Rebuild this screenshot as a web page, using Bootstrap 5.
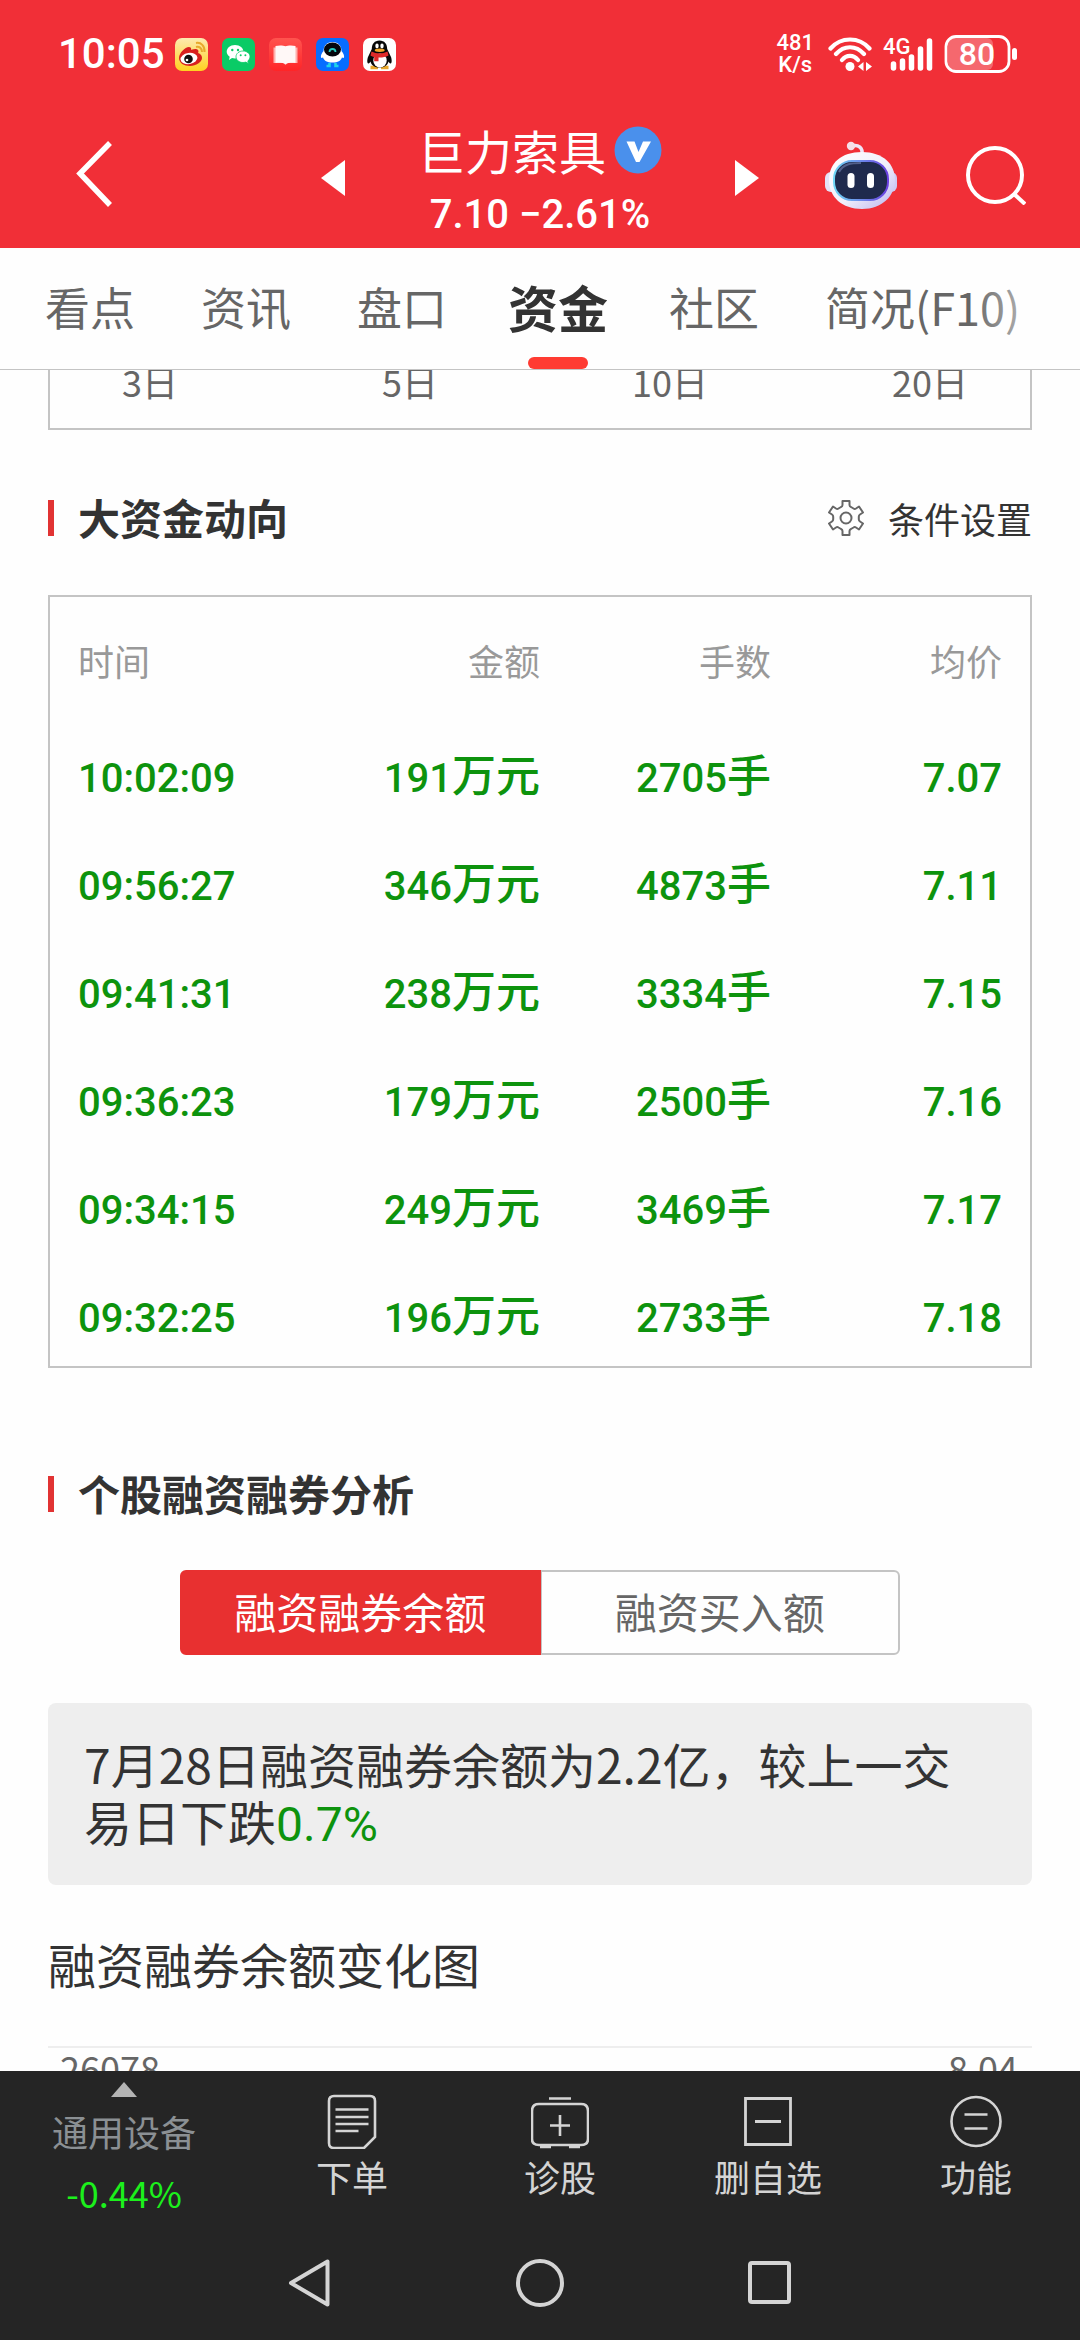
<!DOCTYPE html>
<html lang="zh-CN">
<head>
<meta charset="utf-8">
<meta name="viewport" content="width=device-width, initial-scale=1">
<title>巨力索具 资金</title>
<link href="https://cdn.jsdelivr.net/npm/bootstrap@5.3.0/dist/css/bootstrap.min.css" rel="stylesheet">
<style>
  :root { --cn: "Noto Sans CJK SC", "Noto Sans", sans-serif; --num: Roboto, "Noto Sans CJK SC", sans-serif; }
  body { font-family: var(--cn); font-size: 36px; line-height: 48px; color: #333; background: #fefefe; }
  a { text-decoration: none; color: inherit; }
  svg { display: block; flex: none; }
  .num { font-family: var(--num); }

  .top-area { background: #f12f37; color: #fff; }
  .status-bar { padding: 28px 62px 0 58px; height: 80px; }
  .clock { font-size: 42px; font-weight: 500; line-height: 52px; }
  .app-icons { margin-left: 10px; gap: 14px; }
  .speed { font-size: 22px; font-weight: 500; line-height: 22px; margin-right: 14px; }
  .title-bar { height: 168px; padding: 28px 54px 0; }
  .title-side { flex: 1 1 0; }
  .title-actions { gap: 69px; padding-bottom: 6px; }
  .switcher { width: 438px; }
  .stock-block { padding-top: 16px; }
  .icon-btn { border: 0; padding: 0; background: none; color: inherit; }
  .back-btn { margin-left: 22px; }
  .stock-name { font-size: 47px; line-height: 58px; margin: 0; font-weight: 400; }
  .stock-price { font-size: 40px; line-height: 72px; font-weight: 500; }

  .tab-strip { height: 122px; padding: 0 45px; gap: 66px; font-size: 45px; color: #666; background: #fefefe; border-bottom: 1px solid #c4c4c4; flex-wrap: nowrap; overflow: hidden; }
  .tab-strip::after { content: ""; position: absolute; inset: 0 0 0 auto; width: 110px; background: linear-gradient(90deg, #fefefe00, #fefefe); }
  .tab-strip a { height: 121px; line-height: 117px; white-space: nowrap; position: relative; }
  .tab-strip a.active { font-size: 50px; font-weight: 700; color: #333; margin: 0 -5px; }
  .tab-strip a.active::after { content: ""; position: absolute; left: 50%; bottom: 0; width: 60px; height: 12px; margin-left: -30px; border-radius: 6px; background: #ff3b32; }

  .page-body { padding: 0 48px; flex: 1 1 0; min-height: 0; }
  .framed { border: 2px solid #c4c4c4; }
  .period-box { border-top: 0; padding-bottom: 36px; color: #666; line-height: 22px; }
  .period-box .row { --bs-gutter-x: 60px; }
  .sec-head { height: 60px; }
  .sec-head h2 { font-size: 42px; line-height: 58px; font-weight: 700; margin: 0; padding: 0 0 2px 24px; }
  .sec-bar { width: 6px; height: 36px; background: #e13333; }
  .head-a { margin-top: 58px; margin-bottom: 47px; }
  .head-b { margin-top: 96px; margin-bottom: 46px; }
  .settings { color: #333; gap: 24px; }

  .flow-box { padding: 0 28px; }
  .flow-table { table-layout: fixed; margin: 0; --bs-table-bg: transparent; }
  .flow-table th, .flow-table td { padding: 0; border: 0; vertical-align: middle; text-align: right; }
  .flow-table th { height: 125px; font-weight: 400; color: #999; }
  .flow-table td { height: 108px; padding-top: 21px; vertical-align: baseline; font-family: var(--num); font-size: 40px; font-weight: 500; color: #0d930d; line-height: 60px; }
  .flow-table tr:last-child td { height: 104px; }
  .flow-table th:first-child, .flow-table td:first-child { text-align: left; }
  .unit { font-family: var(--cn); font-size: 44px; font-weight: 500; }

  .seg { width: 720px; max-width: 100%; height: 85px; }
  .seg .btn { font-size: 42px; line-height: 60px; padding: 0 0 4px; border: 2px solid #c4c4c4; border-radius: 6px; color: #666; flex: 1 1 0; }
  .seg .btn.active { background: #e83030; border-color: #e83030; color: #fff; }
  .summary { margin-top: 48px; padding: 32px 36px 36px; border-radius: 8px; background: #eee; font-size: 48px; line-height: 57px; }
  .fall { color: #0d930d; line-height: 40px; }
  .chart-title { margin: 48px 0 53px; font-size: 48px; line-height: 60px; font-weight: 400; }
  .chart-top { border-top: 2px solid #eee; padding: 0 14px 0 12px; line-height: 38px; color: #666; }

  .bottom-area { background: #252525; color: #d4d4d4; }
  .tool-row { height: 165px; }
  .index-cell { width: 248px; padding-top: 11px; }
  .index-name { color: #8b9094; line-height: 48px; margin-top: 10px; }
  .index-change { color: #1cf01c; line-height: 48px; margin-top: 13px; }
  .tool { flex: 1 1 0; padding-top: 22px; gap: 3px; line-height: 48px; }
  .sys-row { height: 104px; gap: 182px; padding-bottom: 10px; }
</style>
</head>
<body>
<div class="vh-100 d-flex flex-column overflow-hidden">
  <header class="top-area">
    <div class="status-bar d-flex justify-content-between align-items-center">
      <div class="d-flex align-items-center num">
        <span class="clock">10:05</span>
        <div class="app-icons d-flex">
          <svg width="33" height="33" viewBox="0 0 33 33"><defs><linearGradient id="wb" x2="0" y2="1"><stop stop-color="#fdeab0"/><stop offset="1" stop-color="#ffd21f"/></linearGradient></defs><rect width="33" height="33" rx="7" fill="url(#wb)"/><path d="M4 20C4 15 10 9 14 9c3 0 2 3 2 3s5-2 7 0c1 1 0 3 0 3s4 1 4 5-6 8-12 8S4 25 4 20z" fill="#d8201e"/><ellipse cx="14" cy="20.500" rx="8.500" ry="5.600" fill="#fff" transform="rotate(-8 14 20.500)"/><circle cx="13.500" cy="21" r="4.300" fill="#111"/><circle cx="12" cy="22" r="1.300" fill="#fff"/><path d="M21 9c3-1 6 1 6 5M21 5c5-1 9 3 8.500 9" fill="none" stroke="#e8a92c" stroke-width="2"/></svg>
          <svg width="33" height="33" viewBox="0 0 33 33"><rect width="33" height="33" rx="7" fill="#0acb66"/><path d="M13 7c5 0 8.500 3 8.500 6.800S18 20.500 13 20.500c-1 0-2-.2-3-.5l-3 2 .7-3.300C6 17.500 4.700 16 4.700 13.800 4.700 10 8 7 13 7z" fill="#fff"/><path d="M21 13c4 0 7 2.500 7 5.800 0 1.700-1 3.200-2.200 4.200l.6 2.500-2.600-1.400c-1 .2-1.800.4-2.800.4-4 0-7-2.500-7-5.700S17 13 21 13z" fill="#fff" stroke="#0acb66" stroke-width=".8"/><g fill="#0acb66"><circle cx="10.300" cy="12" r="1.200"/><circle cx="16" cy="12" r="1.200"/><circle cx="18.700" cy="17.300" r="1"/><circle cx="23.400" cy="17.300" r="1"/></g></svg>
          <svg width="33" height="33" viewBox="0 0 33 33"><defs><linearGradient id="bk" x2="0" y2="1"><stop stop-color="#ff544f"/><stop offset="1" stop-color="#ff2527"/></linearGradient></defs><rect width="33" height="33" rx="7" fill="url(#bk)"/><path d="M4.500 9.500h24v15.500h-10l-2 2-2-2h-10z" fill="#ffb0ac"/><path d="M6.500 8c4-1 8-.5 10 .3C18.500 7.500 22.500 7 26.500 8v17c-4-.5-8 0-10 1-2-1-6-1.500-10-1z" fill="#fff8f7"/></svg>
          <svg width="33" height="33" viewBox="0 0 33 33"><rect width="33" height="33" rx="7" fill="#066dff"/><path d="M16.500 4c6 0 9 4 9 9 2 2 3 5 2.500 6.500-.5 1-1.500 0-2 0-1 3-4 5-9.500 5s-8.500-2-9.500-5c-.5 0-1.500 1-2 0C4.500 18 5.500 15 7.500 13c0-5 3-9 9-9z" fill="#fff"/><ellipse cx="16.500" cy="11.500" rx="8.500" ry="7" fill="#05070c"/><path d="M13.500 14c0-4 6-4 6 0" fill="none" stroke="#25cfc0" stroke-width="1.800"/><path d="M13.500 25v3h-3m9-3v3h3" fill="none" stroke="#1fd4e8" stroke-width="2.600"/></svg>
          <svg width="33" height="33" viewBox="0 0 33 33"><rect width="33" height="33" rx="7" fill="#fff"/><path d="M7.500 29.500h7.500m3 0h7.500" stroke="#e9a92c" stroke-width="3.400"/><path d="M16.500 2.500c5 0 7.700 3.500 7.700 8.500l3.800 8c1 3 1 6-.3 6.500-.8.300-1.700-1-2.200-2-1 4-4.500 6-9 6s-8-2-9-6c-.5 1-1.400 2.300-2.200 2C4 25 4 22 5 19l3.800-8c0-5 2.700-8.500 7.700-8.500z" fill="#080808"/><ellipse cx="17" cy="22.500" rx="6.700" ry="7" fill="#fff"/><path d="M8.500 13.500c5 2.500 11 2.500 16 0l1 4c-3 1.700-7 2.200-10 2v3.800h-4.300V19c-1.700-.4-3-1-3.700-1.500z" fill="#e02a2a"/><ellipse cx="14" cy="8" rx="1.700" ry="2.400" fill="#fff"/><ellipse cx="19" cy="8" rx="1.700" ry="2.400" fill="#fff"/><ellipse cx="16.700" cy="12.300" rx="5" ry="1.700" fill="#f2a72a"/></svg>
        </div>
      </div>
      <div class="d-flex align-items-center num">
        <div class="speed text-center">481<br>K/s</div>
        <svg width="44" height="36" viewBox="0 0 44 36" fill="none" stroke="#fff" stroke-width="4.200" stroke-linecap="round"><path d="M2.500 12.500C13 .5 31 .5 41.500 12.500M8 18c8-9 20-9 28 0M14 24c4.500-5.500 11.500-5.500 16 0"/><circle cx="22" cy="30.500" r="4.500" fill="#fff" stroke="none"/><path d="M35.500 26v9l-5.500-4.500zM38 26v9l6-4.500z" fill="#fff" stroke="none"/></svg>
        <svg class="ms-2" width="54" height="36" viewBox="0 0 54 36" stroke="#fff" stroke-width="5.500" stroke-linecap="round"><text x="3" y="18" fill="#fff" stroke="none" font-size="22" font-weight="500">4G</text><path d="M13.500 28v4M22.500 25v7M31.500 21v11M40.500 13v19M49.500 5v27"/></svg>
        <svg class="ms-2" width="76" height="38" viewBox="0 0 76 38"><rect x="6" y="3" width="45" height="32" rx="6" fill="#fff" fill-opacity=".28"/><rect x="4" y="1.500" width="63" height="35" rx="10" fill="none" stroke="#fff" stroke-width="2.800"/><rect x="70" y="13" width="5" height="12" rx="2.500" fill="#fff"/><text x="35" y="30" text-anchor="middle" fill="#fff" font-size="32" font-weight="500">80</text></svg>
      </div>
    </div>
    <div class="title-bar d-flex align-items-center">
      <div class="title-side">
        <button class="icon-btn back-btn" aria-label="返回"><svg width="38" height="66" viewBox="0 0 38 66"><path d="M34 2 4 32.500 34 64" fill="none" stroke="#fff" stroke-width="5.500"/></svg></button>
      </div>
      <div class="switcher flex-shrink-0 d-flex justify-content-between align-items-center">
        <button class="icon-btn" aria-label="上一只"><svg width="24" height="36" viewBox="0 0 24 36"><path d="M24 0v36L0 18z" fill="#fff"/></svg></button>
        <div class="stock-block text-center">
          <div class="d-flex align-items-center justify-content-center gap-2">
            <h1 class="stock-name">巨力索具</h1>
            <svg width="48" height="48" viewBox="0 0 48 48"><circle cx="24" cy="24" r="23.500" fill="#4a90ec"/><path d="M12.500 15.500h8l4 10.500 4.500-10.500h8L25.500 36h-3.500z" fill="#fff"/></svg>
          </div>
          <div class="stock-price num">7.10 −2.61%</div>
        </div>
        <button class="icon-btn" aria-label="下一只"><svg width="24" height="36" viewBox="0 0 24 36"><path d="M0 0v36l24-18z" fill="#fff"/></svg></button>
      </div>
      <div class="title-side title-actions d-flex justify-content-end align-items-center">
        <button class="icon-btn" aria-label="智能助手"><svg width="72" height="68" viewBox="0 0 72 68"><defs><linearGradient id="hd" x2="1" y2="1"><stop stop-color="#fff"/><stop offset=".55" stop-color="#f1effb"/><stop offset="1" stop-color="#b9b4ee"/></linearGradient><linearGradient id="vz" x2="1" y2="0"><stop stop-color="#6fd6f5"/><stop offset="1" stop-color="#6a3fe0"/></linearGradient></defs><path d="M26 5c8-2 12 2 11 9" fill="none" stroke="#efe6f7" stroke-width="3.500"/><circle cx="26" cy="5" r="4.200" fill="#f6dfe8"/><rect y="31" width="14" height="20" rx="6" fill="#e4e2f7"/><rect x="58" y="31" width="14" height="20" rx="6" fill="#cfcbf3"/><path d="M37 11c21 0 33 12 33 28S57 68 37 68 4 56 4 39s12-28 33-28z" fill="url(#hd)"/><rect x="9" y="20" width="54" height="39" rx="18" fill="#1f2a4d" stroke="url(#vz)" stroke-width="2"/><path d="M14 31c4-8 12-9 22-9" fill="none" stroke="#53608a" stroke-width="2"/><rect x="22.500" y="32" width="7" height="15" rx="3.500" fill="#fff"/><rect x="42" y="32" width="7" height="15" rx="3.500" fill="#fff"/></svg></button>
        <button class="icon-btn" aria-label="搜索"><svg width="60" height="60" viewBox="0 0 60 60" fill="none" stroke="#fff" stroke-width="4"><circle cx="29" cy="30" r="27"/><path d="m48 49 11 10"/></svg></button>
      </div>
    </div>
  </header>

  <nav class="tab-strip nav position-relative flex-shrink-0">
    <a href="#">看点</a><a href="#">资讯</a><a href="#">盘口</a><a href="#" class="active" aria-current="page">资金</a><a href="#">社区</a><a href="#">简况(F10)</a>
  </nav>

  <main class="page-body overflow-hidden">
    <div class="framed period-box">
      <div class="row text-center">
        <div class="col px-0">3日</div><div class="col px-0">5日</div><div class="col px-0">10日</div><div class="col px-0">20日</div>
      </div>
    </div>

    <section>
      <div class="sec-head head-a d-flex align-items-center">
        <span class="sec-bar"></span>
        <h2>大资金动向</h2>
        <button class="icon-btn settings ms-auto d-flex align-items-center">
          <svg width="36" height="36" viewBox="0 0 36 36" fill="none" stroke="#666" stroke-width="2" stroke-linejoin="round"><path d="M14.500 1h7v4q0 1.500 1.500 2l2.500 1.500q1.200.8 2.500 0L31 6.500l4 6-3 2q-1.200.8-1.200 2.300v2.400q0 1.500 1.200 2.300l3 2-4 6-3-2q-1.300-.8-2.500 0L23 29q-1.500.6-1.500 2v4h-7v-4q0-1.400-1.500-2l-2.500-1.500q-1.200-.8-2.500 0l-3 2-4-6 3-2q1.200-.8 1.200-2.300v-2.400q0-1.500-1.200-2.300l-3-2 4-6 3 2q1.300.8 2.500 0L13 7q1.500-.5 1.500-2z"/><circle cx="18" cy="18" r="5.500"/></svg>
          条件设置
        </button>
      </div>
      <div class="framed flow-box">
        <table class="table flow-table">
          <thead><tr><th scope="col">时间</th><th scope="col">金额</th><th scope="col">手数</th><th scope="col">均价</th></tr></thead>
          <tbody>
            <tr><td>10:02:09</td><td>191<span class="unit">万元</span></td><td>2705<span class="unit">手</span></td><td>7.07</td></tr>
            <tr><td>09:56:27</td><td>346<span class="unit">万元</span></td><td>4873<span class="unit">手</span></td><td>7.11</td></tr>
            <tr><td>09:41:31</td><td>238<span class="unit">万元</span></td><td>3334<span class="unit">手</span></td><td>7.15</td></tr>
            <tr><td>09:36:23</td><td>179<span class="unit">万元</span></td><td>2500<span class="unit">手</span></td><td>7.16</td></tr>
            <tr><td>09:34:15</td><td>249<span class="unit">万元</span></td><td>3469<span class="unit">手</span></td><td>7.17</td></tr>
            <tr><td>09:32:25</td><td>196<span class="unit">万元</span></td><td>2733<span class="unit">手</span></td><td>7.18</td></tr>
          </tbody>
        </table>
      </div>
    </section>

    <section>
      <div class="sec-head head-b d-flex align-items-center">
        <span class="sec-bar"></span>
        <h2>个股融资融券分析</h2>
      </div>
      <div class="seg btn-group d-flex mx-auto" role="group">
        <button class="btn active">融资融券余额</button>
        <button class="btn">融资买入额</button>
      </div>
      <div class="summary">7月28日融资融券余额为2.2亿，较上一交易日下跌<span class="fall num">0.7%</span></div>
      <h3 class="chart-title">融资融券余额变化图</h3>
      <div class="chart-top d-flex justify-content-between"><span>26078</span><span>8.04</span></div>
    </section>
  </main>

  <footer class="bottom-area flex-shrink-0">
    <div class="tool-row d-flex text-center">
      <a href="#" class="index-cell d-block">
        <svg class="mx-auto" width="26" height="15" viewBox="0 0 26 15"><path d="M13 0 26 15H0z" fill="#b4b4b4"/></svg>
        <div class="index-name">通用设备</div>
        <div class="index-change">-0.44%</div>
      </a>
      <a href="#" class="tool d-flex flex-column align-items-center">
        <svg width="50" height="56" viewBox="0 0 50 56" fill="none" stroke="#d4d4d4" stroke-width="2.600"><path d="M7 3h36q5 0 5 5v36L37 55H7q-5 0-5-5V8q0-5 5-5zM8.500 16.500h33M8.500 24h33M8.500 31h33M8.500 38h23"/></svg>
        下单
      </a>
      <a href="#" class="tool d-flex flex-column align-items-center">
        <svg width="58" height="56" viewBox="0 0 58 56" fill="none" stroke="#d4d4d4" stroke-width="2.600"><path d="M18 5.500h22M8 11h42q7 0 7 7v28q0 6-7 6H8q-7 0-7-6V18q0-7 7-7zM29 22v21M19 32.500h20"/><path d="M9 53.500h11M38 53.500h11" stroke-width="3.500"/></svg>
        诊股
      </a>
      <a href="#" class="tool d-flex flex-column align-items-center">
        <svg width="50" height="56" viewBox="0 0 50 56" fill="none" stroke="#d4d4d4" stroke-width="2.800"><path d="M2.500 5.500h45v46h-45zM12 28.500h26"/></svg>
        删自选
      </a>
      <a href="#" class="tool d-flex flex-column align-items-center">
        <svg width="52" height="56" viewBox="0 0 52 56" fill="none" stroke="#d4d4d4" stroke-width="2.600"><circle cx="26" cy="28.500" r="24.500"/><path d="M14.500 21.500h23M14.500 35.500h23"/></svg>
        功能
      </a>
    </div>
    <div class="sys-row d-flex justify-content-center align-items-center">
      <button class="icon-btn" aria-label="后退"><svg width="48" height="48" viewBox="0 0 48 48" fill="none" stroke="#d4d4d4" stroke-width="4" stroke-linejoin="round"><path d="M41.500 2.500v43L5 24z"/></svg></button>
      <button class="icon-btn" aria-label="主屏幕"><svg width="48" height="48" viewBox="0 0 48 48" fill="none" stroke="#d4d4d4" stroke-width="4"><circle cx="24" cy="24" r="22"/></svg></button>
      <button class="icon-btn" aria-label="最近任务"><svg width="48" height="48" viewBox="0 0 48 48" fill="none" stroke="#d4d4d4" stroke-width="4" stroke-linejoin="round"><rect x="4" y="4" width="39" height="39" rx="2"/></svg></button>
    </div>
  </footer>
</div>
<script src="https://cdn.jsdelivr.net/npm/bootstrap@5.3.0/dist/js/bootstrap.bundle.min.js"></script>
</body>
</html>
